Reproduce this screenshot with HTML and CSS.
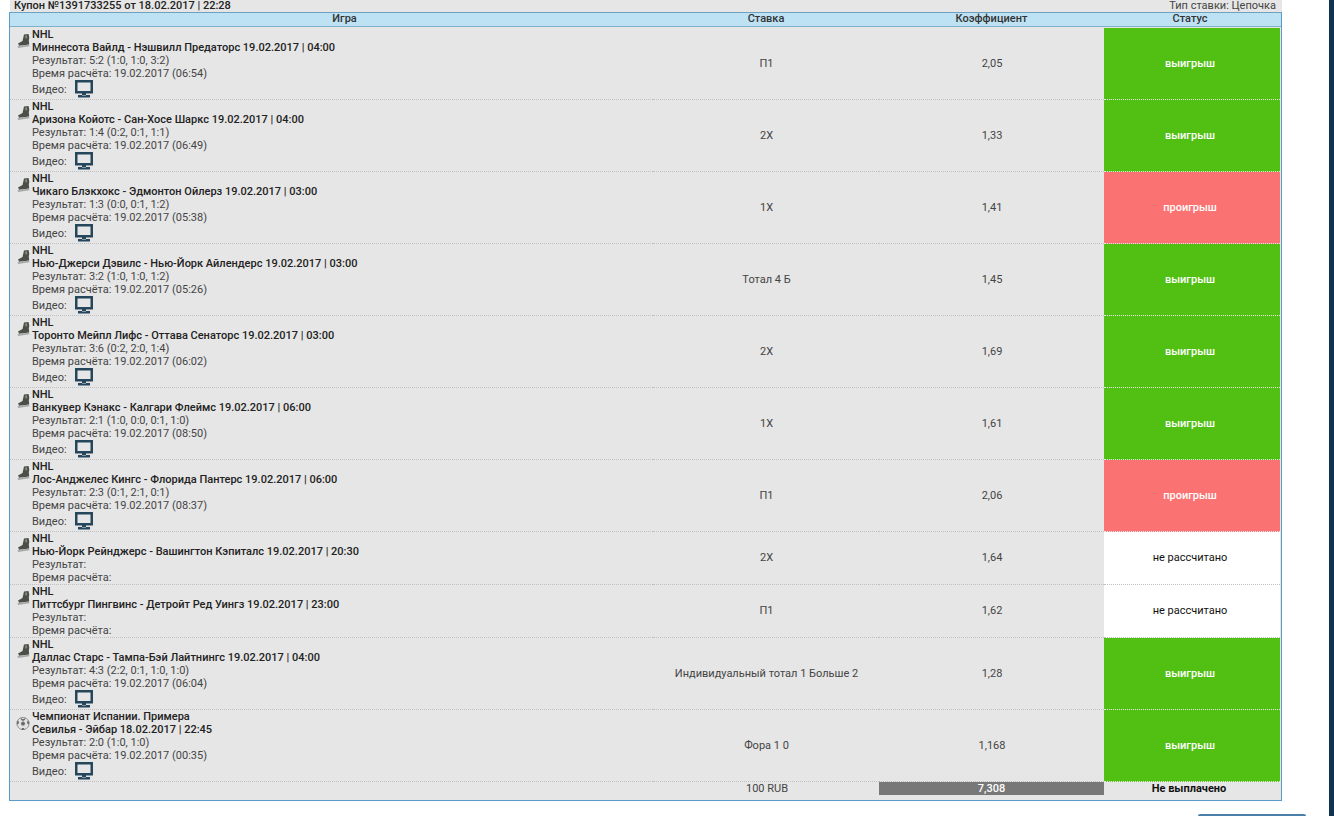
FILE: index.html
```html
<!DOCTYPE html>
<html lang="ru">
<head>
<meta charset="utf-8">
<title>Купон</title>
<link rel="stylesheet" href="styles.css">
</head>
<body>
<svg class="defs" width="0" height="0" aria-hidden="true">
<symbol id="tv" viewBox="0 0 18 18"><path d="M0 0h18v13.500H0z M2.500 2.500v8.500h13V2.500z M7 13.500h4v2H7z M3 15h12v2.500H3z" fill="#26465c" fill-rule="evenodd"/></symbol>
<symbol id="skate" viewBox="0 0 14 15"><path d="M8 .5l4.500-.5.8 3.500-.5 3 .4 4-10 1.200L2 9.500l4.500-2.500z" fill="#4b4f48"/><path d="M9 1.500l2-.3.300 3-2 .3z" fill="#7d8a72"/><path d="M1.500 12l11.500-1.200.5 1.500L2 14z" fill="#a8a8a8"/></symbol>
<symbol id="ball" viewBox="0 0 16 16"><circle cx="8" cy="8" r="7" fill="#e2e2e2" stroke="#8a8a8a"/><path d="M8 5.500l2.500 1.800-1 3h-3l-1-3z M5 1.500l3 1.500 3-1.500-1 2.500-2 1-2-1z M13.500 4.500l-1 2.500 1.500 2.500 1-1.500V6z M2.500 4.500l1 2.500L2 9.500 1 8V6z M6 15l1-2h2l1 2z" fill="#6a6a6a"/></symbol>
</svg>
<main class="coupon">
<div class="topline"><b>Купон №1391733255 от 18.02.2017 | 22:28</b><span>Тип ставки: Цепочка</span></div>
<div class="panel">
<div class="head"><div class="game-h">Игра</div><div>Ставка</div><div>Коэффициент</div><div class="status-h">Статус</div></div>

<div class="row"><div class="game"><svg class="sport"><use href="#skate"/></svg><div class="info"><b>NHL</b><b>Миннесота Вайлд - Нэшвилл Предаторс 19.02.2017 | 04:00</b><span>Результат: 5:2 (1:0, 1:0, 3:2)</span><span>Время расчёта: 19.02.2017 (06:54)</span><span class="video">Видео: <svg class="tv"><use href="#tv"/></svg></span></div></div><div class="cell">П1</div><div class="cell">2,05</div><div class="status win">выигрыш</div></div>

<div class="row"><div class="game"><svg class="sport"><use href="#skate"/></svg><div class="info"><b>NHL</b><b>Аризона Койотс - Сан-Хосе Шаркс 19.02.2017 | 04:00</b><span>Результат: 1:4 (0:2, 0:1, 1:1)</span><span>Время расчёта: 19.02.2017 (06:49)</span><span class="video">Видео: <svg class="tv"><use href="#tv"/></svg></span></div></div><div class="cell">2Х</div><div class="cell">1,33</div><div class="status win">выигрыш</div></div>

<div class="row"><div class="game"><svg class="sport"><use href="#skate"/></svg><div class="info"><b>NHL</b><b>Чикаго Блэкхокс - Эдмонтон Ойлерз 19.02.2017 | 03:00</b><span>Результат: 1:3 (0:0, 0:1, 1:2)</span><span>Время расчёта: 19.02.2017 (05:38)</span><span class="video">Видео: <svg class="tv"><use href="#tv"/></svg></span></div></div><div class="cell">1Х</div><div class="cell">1,41</div><div class="status lose">проигрыш</div></div>

<div class="row"><div class="game"><svg class="sport"><use href="#skate"/></svg><div class="info"><b>NHL</b><b>Нью-Джерси Дэвилс - Нью-Йорк Айлендерс 19.02.2017 | 03:00</b><span>Результат: 3:2 (1:0, 1:0, 1:2)</span><span>Время расчёта: 19.02.2017 (05:26)</span><span class="video">Видео: <svg class="tv"><use href="#tv"/></svg></span></div></div><div class="cell">Тотал 4 Б</div><div class="cell">1,45</div><div class="status win">выигрыш</div></div>

<div class="row"><div class="game"><svg class="sport"><use href="#skate"/></svg><div class="info"><b>NHL</b><b>Торонто Мейпл Лифс - Оттава Сенаторс 19.02.2017 | 03:00</b><span>Результат: 3:6 (0:2, 2:0, 1:4)</span><span>Время расчёта: 19.02.2017 (06:02)</span><span class="video">Видео: <svg class="tv"><use href="#tv"/></svg></span></div></div><div class="cell">2Х</div><div class="cell">1,69</div><div class="status win">выигрыш</div></div>

<div class="row"><div class="game"><svg class="sport"><use href="#skate"/></svg><div class="info"><b>NHL</b><b>Ванкувер Кэнакс - Калгари Флеймс 19.02.2017 | 06:00</b><span>Результат: 2:1 (1:0, 0:0, 0:1, 1:0)</span><span>Время расчёта: 19.02.2017 (08:50)</span><span class="video">Видео: <svg class="tv"><use href="#tv"/></svg></span></div></div><div class="cell">1Х</div><div class="cell">1,61</div><div class="status win">выигрыш</div></div>

<div class="row"><div class="game"><svg class="sport"><use href="#skate"/></svg><div class="info"><b>NHL</b><b>Лос-Анджелес Кингс - Флорида Пантерс 19.02.2017 | 06:00</b><span>Результат: 2:3 (0:1, 2:1, 0:1)</span><span>Время расчёта: 19.02.2017 (08:37)</span><span class="video">Видео: <svg class="tv"><use href="#tv"/></svg></span></div></div><div class="cell">П1</div><div class="cell">2,06</div><div class="status lose">проигрыш</div></div>

<div class="row"><div class="game"><svg class="sport"><use href="#skate"/></svg><div class="info"><b>NHL</b><b>Нью-Йорк Рейнджерс - Вашингтон Кэпиталс 19.02.2017 | 20:30</b><span>Результат:</span><span>Время расчёта:</span></div></div><div class="cell">2Х</div><div class="cell">1,64</div><div class="status pending">не рассчитано</div></div>

<div class="row"><div class="game"><svg class="sport"><use href="#skate"/></svg><div class="info"><b>NHL</b><b>Питтсбург Пингвинс - Детройт Ред Уингз 19.02.2017 | 23:00</b><span>Результат:</span><span>Время расчёта:</span></div></div><div class="cell">П1</div><div class="cell">1,62</div><div class="status pending">не рассчитано</div></div>

<div class="row"><div class="game"><svg class="sport"><use href="#skate"/></svg><div class="info"><b>NHL</b><b>Даллас Старс - Тампа-Бэй Лайтнингс 19.02.2017 | 04:00</b><span>Результат: 4:3 (2:2, 0:1, 1:0, 1:0)</span><span>Время расчёта: 19.02.2017 (06:04)</span><span class="video">Видео: <svg class="tv"><use href="#tv"/></svg></span></div></div><div class="cell">Индивидуальный тотал 1 Больше 2</div><div class="cell">1,28</div><div class="status win">выигрыш</div></div>

<div class="row"><div class="game"><svg class="sport"><use href="#ball"/></svg><div class="info"><b>Чемпионат Испании. Примера</b><b>Севилья - Эйбар 18.02.2017 | 22:45</b><span>Результат: 2:0 (1:0, 1:0)</span><span>Время расчёта: 19.02.2017 (00:35)</span><span class="video">Видео: <svg class="tv"><use href="#tv"/></svg></span></div></div><div class="cell">Фора 1 0</div><div class="cell">1,168</div><div class="status win">выигрыш</div></div>

<div class="foot"><div class="foot-stake">100 RUB</div><div class="total">7,308</div><div class="paid">Не выплачено</div></div>
</div>
</main>
<div class="side-strip"></div>
<div class="corner-btn"></div>
</body>
</html>
```
FILE: styles.css
```css
* { box-sizing: border-box; }
html, body { margin: 0; height: 816px; overflow: hidden; background: #fff; }
body { font: 11px/13px Roboto, "Liberation Sans", sans-serif; color: #333; }
.defs { position: absolute; }
.coupon { width: 1282px; padding-left: 9px; }
.topline { display: flex; justify-content: space-between; height: 12px; margin-left: 1px; padding: 0 6px 0 4px; background: #e6e6e6; line-height: 11px; }
.topline b { font-weight: 500; color: #222; }
.topline span { color: #444; }
.panel { border: 1px solid #5b9ac9; border-top-color: #6fa0c0; background: #e6e6e6; }
.head, .row, .foot { display: grid; grid-template-columns: 643px 226px 225px 176px; }
.head { height: 14px; margin-bottom: 1px; background: #bde2f4; border-bottom: 1px solid #7fb0cc; text-align: center; font-weight: 500; line-height: 12px; color: #333; }
.game-h { padding-left: 26px; }
.status-h { padding-right: 4px; }
.game { display: flex; padding-left: 6px; border-bottom: 1px dotted #c0c0c0; }
.sport { width: 14px; height: 15px; margin: 6px 2px 0 0; flex: none; }
.info { display: flex; flex-direction: column; }
.info b { font-weight: 500; color: #222; }
.info span { color: #444; }
.info .video { display: flex; align-items: center; gap: 8px; height: 19px; }
.tv { width: 18px; height: 18px; align-self: flex-start; }
.cell { display: flex; align-items: center; justify-content: center; padding: 0 0 1px 1px; color: #444; border-bottom: 1px dotted #c0c0c0; }
.status { display: flex; align-items: center; justify-content: center; padding: 0 4px 1px 0; border-bottom: 1px dotted #eaeaea; }
.win { background: #52c012; color: #fff; font-weight: 500; }
.lose { background: #fb7272; color: #fff; font-weight: 500; }
.pending { background: #fff; color: #111; border-bottom-color: #c0c0c0; }
.foot { height: 18px; text-align: center; line-height: 13px; color: #444; }
.foot-stake { grid-column: 2; padding-left: 2px; }
.total { background: #787878; color: #fff; font-weight: 500; height: 13px; }
.paid { font-weight: 700; color: #111; padding-right: 6px; }
.side-strip { position: absolute; top: 0; right: 0; width: 5px; height: 816px; background: #0f3350; }
.corner-btn { position: absolute; left: 1198px; top: 814px; width: 108px; height: 2px; background: #4a80ac; border-radius: 3px 3px 0 0; }
```
